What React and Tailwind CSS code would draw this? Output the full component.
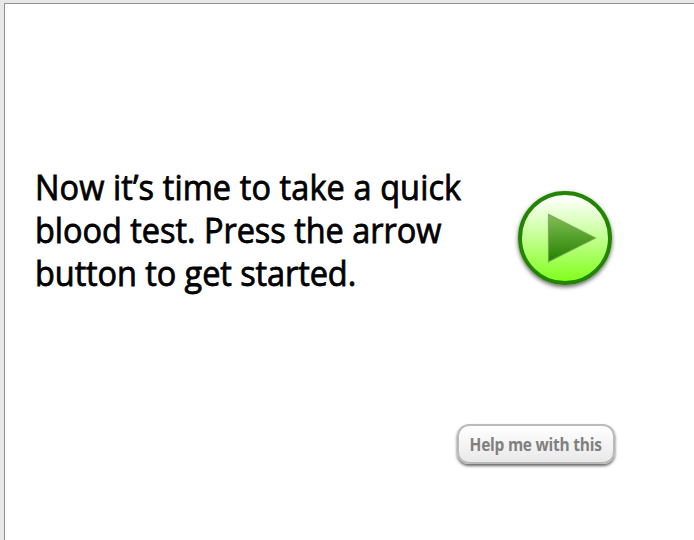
const lines = [
  { text: 'Now it’s time to take a quick', spacing: 'tracking-[0.11px]' },
  { text: 'blood test. Press the arrow', spacing: 'tracking-[-0.03px]' },
  { text: 'button to get started.', spacing: 'tracking-[-0.08px]' },
];

function PlayIcon() {
  return (
    <svg viewBox="0 0 94 94" className="block h-[94px] w-[94px]" aria-hidden="true">
      <defs>
        <linearGradient id="disc" x1="0" y1="0" x2="0" y2="1">
          <stop offset="0" stopColor="#ffffff" />
          <stop offset="0.1" stopColor="#f8fff2" />
          <stop offset="1" stopColor="#7fff16" />
        </linearGradient>
        <linearGradient id="arrow" x1="0" y1="0" x2="0" y2="1">
          <stop offset="0" stopColor="#83bf56" />
          <stop offset="1" stopColor="#248000" />
        </linearGradient>
      </defs>
      <circle cx="47" cy="47" r="45" fill="url(#disc)" stroke="#218500" strokeWidth="4" />
      <path d="M30.5 23.3V70.7L77.5 47Z" fill="url(#arrow)" stroke="#6f9b50" strokeOpacity="0.65" strokeWidth="1.3" />
    </svg>
  );
}

export default function App() {
  return (
    <div className="h-[540px] w-[694px] overflow-hidden bg-[#e7e7e7] pt-[3px] pl-[4px] font-['Open_Sans','Noto_Sans',sans-serif]">
      <main className="flex h-[537px] w-[690px] flex-col border-t border-l border-[#929292] bg-white">
        <div className="flex pt-[162px] pl-[30px]">
          <h1 className="w-[483px] text-[34px] leading-[43px] font-medium whitespace-nowrap text-black [-webkit-text-stroke:0.8px_black]">
            {lines.map((line) => (
              <span key={line.text} className={`block origin-left scale-x-[0.955] ${line.spacing}`}>{line.text}</span>
            ))}
          </h1>
          <button aria-label="Start" className="mt-[25px] h-[94px] w-[94px] rounded-full shadow-[0_2px_4px_rgba(0,0,0,0.6)]">
            <PlayIcon />
          </button>
        </div>
        <button className="mt-[129px] ml-[452px] flex h-[40px] w-[158px] items-center justify-center rounded-[12px] border-2 border-[#bababa] bg-linear-to-b from-white to-[#e9e9e9] text-[17px] font-bold whitespace-nowrap text-[#808080] shadow-[0_2px_3px_rgba(0,0,0,0.6)]">
          <span className="block scale-x-[0.91] pt-[2px] tracking-[-0.25px]">Help me with this</span>
        </button>
      </main>
    </div>
  );
}
